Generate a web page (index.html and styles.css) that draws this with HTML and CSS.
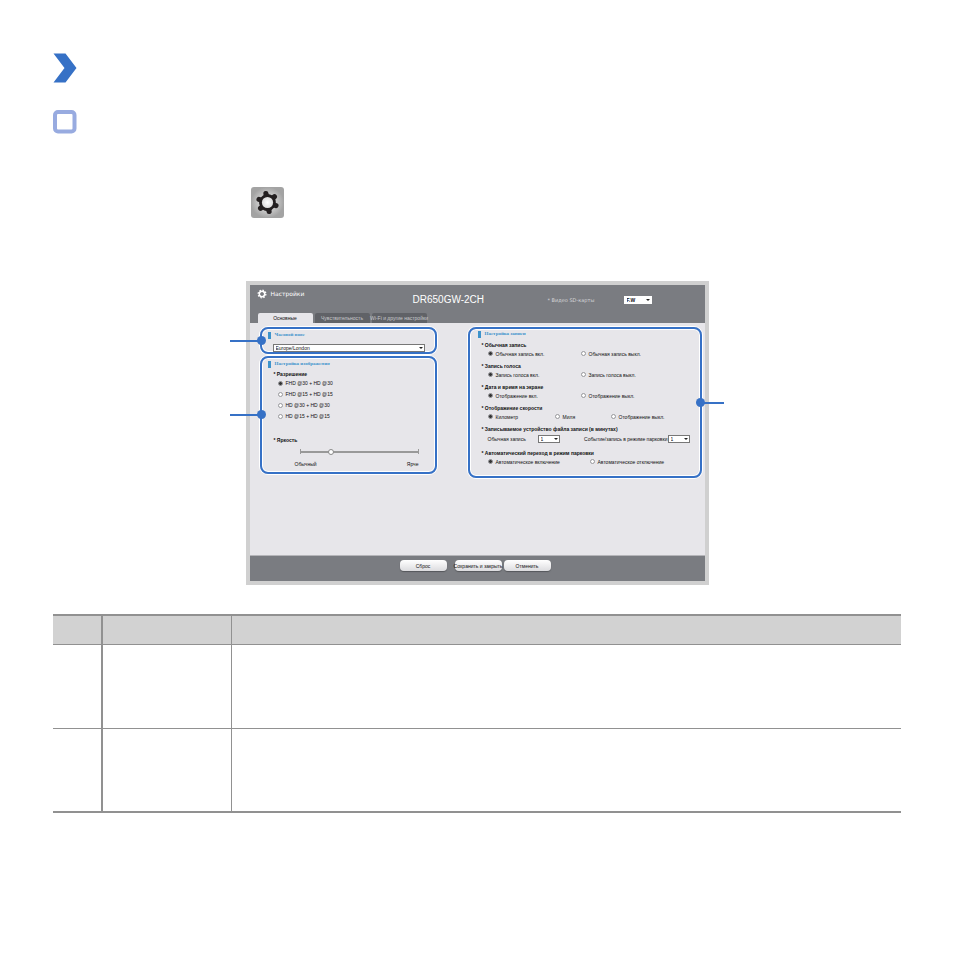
FILE: index.html
```html
<!DOCTYPE html>
<html lang="ru">
<head>
    <meta charset="UTF-8">
    <meta name="viewport" content="width=device-width, initial-scale=1.0">
    <title>Настройки</title>
    <link rel="stylesheet" href="styles.css">
</head>
<body>
    <main class="page">
        <svg class="chevron" viewBox="0 0 24 30" aria-hidden="true">
            <path d="M0.5 0.5H12.5L23.5 15L12.5 29.5H0.5L11.5 15Z" fill="#3671c6"/>
        </svg>
        <svg class="square" viewBox="0 0 24 24" aria-hidden="true">
            <rect x="2" y="2" width="19.5" height="19.5" rx="3" fill="none" stroke="#98abe0" stroke-width="4"/>
        </svg>

        <div class="gear-tile">
            <svg viewBox="-16.5 -15.5 33 31" aria-hidden="true">
                <defs>
                    <radialGradient id="tile">
                        <stop offset="0.3" stop-color="#dcdcdc"/>
                        <stop offset="1" stop-color="#a3a3a3"/>
                    </radialGradient>
                    <radialGradient id="hub">
                        <stop offset="0" stop-color="#fff"/>
                        <stop offset="1" stop-color="#dcdcdc"/>
                    </radialGradient>
                </defs>
                <rect x="-16.5" y="-15.5" width="33" height="31" rx="3" fill="url(#tile)"/>
                <g fill="#231f20" transform="rotate(-10)">
                    <circle r="8.4"/>
                    <path d="M0 -9V9M-7.8 -4.5L7.8 4.5M-7.8 4.5L7.8 -4.5" stroke="#231f20" stroke-width="5.2" stroke-linecap="round"/>
                </g>
                <circle r="5.6" fill="url(#hub)"/>
            </svg>
        </div>

        <form class="window">
            <header class="window-header">
                <div class="window-top">
                    <div class="brand">
                        <svg viewBox="-6 -6 12 12" aria-hidden="true">
                            <circle r="3.2" fill="none" stroke="#fff" stroke-width="1.8"/>
                            <circle r="4.6" fill="none" stroke="#fff" stroke-width="1.6" stroke-dasharray="1.8 1.81"/>
                        </svg>
                        <span>Настройки</span>
                    </div>
                    <h1 class="model">DR650GW-2CH</h1>
                    <label class="sd-label" for="firmware">* Видео SD-карты</label>
                    <div class="select select-bold">
                        <select id="firmware"><option>F.W</option></select>
                    </div>
                </div>
                <nav class="tabs">
                    <button type="button" class="tab active">Основные</button>
                    <button type="button" class="tab">Чувствительность</button>
                    <button type="button" class="tab">Wi-Fi и другие настройки</button>
                </nav>
            </header>

            <div class="window-body">
                <div class="column-left">
                    <section class="panel panel-zone callout-left">
                        <h2><label for="zone">Часовой пояс</label></h2>
                        <div class="select">
                            <select id="zone"><option>Europe/London</option></select>
                        </div>
                    </section>

                    <section class="panel panel-image callout-left">
                        <h2>Настройка изображения</h2>
                        <h3>Разрешение</h3>
                        <div class="resolutions">
                            <label><input type="radio" name="resolution" checked>FHD @30 + HD @30</label>
                            <label><input type="radio" name="resolution">FHD @15 + HD @15</label>
                            <label><input type="radio" name="resolution">HD @30 + HD @30</label>
                            <label><input type="radio" name="resolution">HD @15 + HD @15</label>
                        </div>
                        <h3><label for="brightness">Яркость</label></h3>
                        <div class="slider">
                            <input type="range" id="brightness" min="0" max="4" value="1">
                        </div>
                        <div class="slider-labels">
                            <span>Обычный</span>
                            <span>Ярче</span>
                        </div>
                    </section>
                </div>

                <section class="panel panel-record callout-right">
                    <h2>Настройка записи</h2>
                    <div class="groups">
                        <div class="group">
                            <h3>Обычная запись</h3>
                            <div class="options">
                                <label><input type="radio" name="normal" checked>Обычная запись вкл.</label>
                                <label><input type="radio" name="normal">Обычная запись выкл.</label>
                            </div>
                        </div>
                        <div class="group">
                            <h3>Запись голоса</h3>
                            <div class="options">
                                <label><input type="radio" name="voice" checked>Запись голоса вкл.</label>
                                <label><input type="radio" name="voice">Запись голоса выкл.</label>
                            </div>
                        </div>
                        <div class="group">
                            <h3>Дата и время на экране</h3>
                            <div class="options">
                                <label><input type="radio" name="date" checked>Отображение вкл.</label>
                                <label><input type="radio" name="date">Отображение выкл.</label>
                            </div>
                        </div>
                        <div class="group">
                            <h3>Отображение скорости</h3>
                            <div class="options options-speed">
                                <label><input type="radio" name="speed" checked>Километр</label>
                                <label><input type="radio" name="speed">Миля</label>
                                <label><input type="radio" name="speed">Отображение выкл.</label>
                            </div>
                        </div>
                        <div class="group">
                            <h3>Записываемое устройство файла записи (в минутах)</h3>
                            <div class="options options-length">
                                <label for="length-normal">Обычная запись</label>
                                <div class="select">
                                    <select id="length-normal"><option>1</option></select>
                                </div>
                                <label for="length-event">Событие/запись в режиме парковки</label>
                                <div class="select">
                                    <select id="length-event"><option>1</option></select>
                                </div>
                            </div>
                        </div>
                        <div class="group">
                            <h3>Автоматический переход в режим парковки</h3>
                            <div class="options options-parking">
                                <label><input type="radio" name="parking" checked>Автоматическое включение</label>
                                <label><input type="radio" name="parking">Автоматическое отключение</label>
                            </div>
                        </div>
                    </div>
                </section>
            </div>

            <footer class="window-footer">
                <button type="reset">Сброс</button>
                <div class="button-pair">
                    <button type="button">Сохранить и закрыть</button>
                    <button type="button">Отменить</button>
                </div>
            </footer>
        </form>

        <table class="description">
            <colgroup>
                <col class="col-number">
                <col class="col-name">
                <col>
            </colgroup>
            <thead>
                <tr><th></th><th></th><th></th></tr>
            </thead>
            <tbody>
                <tr><td></td><td></td><td></td></tr>
                <tr><td></td><td></td><td></td></tr>
            </tbody>
        </table>
    </main>
</body>
</html>
```
FILE: styles.css
```css
* {
    margin: 0;
    padding: 0;
    box-sizing: border-box;
}

body {
    background-color: #fff;
    color: #111;
    font-family: 'Liberation Sans Narrow', 'Liberation Sans', sans-serif;
    font-size: 5px;
    line-height: 8px;
}

button,
select {
    font: inherit;
    color: inherit;
    border: none;
}

.page {
    padding: 53px 54px 53px 53px;
}

/* Page icons */
.chevron {
    display: block;
    width: 24px;
    height: 30px;
}

.square {
    display: block;
    width: 24px;
    height: 24px;
    margin-top: 27px;
}

.gear-tile {
    margin: 53px 0 0 198px;
}

.gear-tile svg {
    display: block;
    width: 33px;
    height: 31px;
}

/* Settings window */
.window {
    max-width: 463px;
    margin: 63px auto 29px;
    border: 4px solid #d0d0d0;
    background-color: #e7e6ea;
}

.window-header {
    background-color: #7a7c81;
    color: #fff;
}

.window-top {
    display: grid;
    grid-template-columns: 156px 135px 76px 28px;
    align-items: center;
    height: 28px;
    padding: 2px 0 0 7px;
}

.brand {
    display: flex;
    align-items: center;
    gap: 4px;
    align-self: start;
    padding-top: 2px;
    font-family: 'DejaVu Sans', sans-serif;
    font-size: 6px;
}

.brand svg {
    width: 10px;
    height: 10px;
}

.model {
    font-family: 'Liberation Sans', sans-serif;
    font-size: 10px;
    font-weight: normal;
}

.sd-label {
    color: #d4d5d8;
    font-family: 'DejaVu Sans', sans-serif;
}

.tabs {
    display: flex;
    gap: 2px;
    padding-left: 8px;
}

.tab {
    display: flex;
    align-items: center;
    justify-content: center;
    width: 55px;
    height: 10px;
    border-radius: 2px 2px 0 0;
    background-color: #606267;
    color: #c8c9cc;
    white-space: nowrap;
}

.tab.active {
    background-color: #e7e6ea;
    color: #111;
}

.window-body {
    display: flex;
    justify-content: space-between;
    align-items: flex-start;
    min-height: 232px;
    padding: 4px 3px 4px 10px;
}

.column-left {
    display: flex;
    flex-direction: column;
    gap: 2px;
    width: 177px;
}

/* Panels */
.panel {
    position: relative;
    border: 2px solid #3671c6;
    border-radius: 8px;
    box-shadow: 0 0 0 1px #fff, inset 0 0 0 1px #fff;
}

.panel h2 {
    display: flex;
    align-items: center;
    gap: 4px;
    color: #3d93cc;
    font-family: 'Liberation Serif', serif;
    font-size: 5px;
}

.panel h2::before {
    content: "";
    width: 3px;
    height: 7px;
    background-color: #3d93cc;
}

.panel h3 {
    font-family: 'Liberation Sans', sans-serif;
    font-size: 5px;
}

.panel h3::before {
    content: "* ";
}

.panel-zone {
    padding: 2px 10px 0 6px;
}

.panel-zone .select {
    margin: 5px 0 0 5px;
}

.panel-image {
    padding: 2px 16px 4px 6px;
}

.panel-image h3 {
    margin: 2px 0 0 6px;
}

.resolutions {
    display: flex;
    flex-direction: column;
    gap: 3px;
    margin: 1px 0 16px 10px;
}

.panel-record {
    width: 234px;
    padding: 1px 8px 10px;
}

.groups {
    display: flex;
    flex-direction: column;
    gap: 4px;
    margin: 3px 0 0 4px;
}

.options {
    display: grid;
    grid-template-columns: 93px 1fr;
    align-items: center;
    min-height: 9px;
    padding-left: 6px;
    white-space: nowrap;
}

.options-speed {
    grid-template-columns: 67px 56px 1fr;
}

.options-length {
    grid-template-columns: 50px 22px 108px 22px;
    min-height: 12px;
}

.options-length label:nth-of-type(2) {
    justify-self: end;
}

.options-parking {
    grid-template-columns: 102px 1fr;
}

.panel label:has(input) {
    display: flex;
    align-items: center;
    gap: 3px;
}

/* Form controls */
input[type="radio"] {
    appearance: none;
    width: 5px;
    height: 5px;
    border: 1px solid #97979b;
    border-radius: 50%;
    background-color: #fff;
}

input[type="radio"]:checked {
    background-color: #333;
}

.select {
    position: relative;
}

.select select {
    appearance: none;
    display: block;
    width: 100%;
    height: 8px;
    padding-left: 2px;
    border: 1px solid #777;
    border-radius: 0;
    background-color: #fff;
    color: #111;
    line-height: 6px;
}

.select::after {
    content: "";
    position: absolute;
    top: 3px;
    right: 2px;
    border: 2px solid transparent;
    border-top-color: #222;
    pointer-events: none;
}

.select-bold select {
    border-color: #fff;
    font-weight: bold;
}

.slider {
    display: flex;
    align-items: center;
    height: 5px;
    margin: 5px 0 0 32px;
    border-left: 1px solid #999;
    border-right: 1px solid #999;
}

.slider input {
    appearance: none;
    width: 100%;
    height: 2px;
    background-color: #999;
}

.slider input::-webkit-slider-thumb {
    appearance: none;
    width: 6px;
    height: 6px;
    border: 1px solid #888;
    border-radius: 50%;
    background-color: #fff;
}

.slider-labels {
    display: flex;
    justify-content: space-between;
    margin: 6px 0 0 27px;
}

/* Callout dots and their lines */
.callout-left::before,
.callout-right::before {
    content: "";
    position: absolute;
    top: 50%;
    width: 32px;
    height: 2px;
    margin-top: -1px;
    background-color: #3671c6;
}

.callout-left::after,
.callout-right::after {
    content: "";
    position: absolute;
    top: 50%;
    width: 9px;
    height: 9px;
    margin-top: -5px;
    border-radius: 50%;
    background-color: #3671c6;
}

.callout-left::before {
    right: 100%;
}

.callout-left::after {
    left: -5px;
}

.callout-right::before {
    left: 100%;
    width: 24px;
}

.callout-right::after {
    right: -5px;
}

/* Window footer */
.window-footer {
    display: flex;
    justify-content: center;
    gap: 8px;
    padding: 4px 4px 10px 0;
    border-top: 1px solid #b5b5b9;
    background-color: #7a7c81;
}

.button-pair {
    display: flex;
    gap: 2px;
}

.window-footer button {
    display: flex;
    align-items: center;
    justify-content: center;
    width: 47px;
    height: 11px;
    border-radius: 4px;
    background: linear-gradient(#fff, #dcdcdf);
    box-shadow: 0 1px 1px #55575b;
    white-space: nowrap;
}

/* Description table */
.description {
    width: 100%;
    table-layout: fixed;
    border-collapse: separate;
    border-spacing: 0;
    border-top: 2px solid #919191;
    border-bottom: 2px solid #919191;
}

.col-number {
    width: 50px;
}

.col-name {
    width: 129px;
}

.description th {
    height: 29px;
    background-color: #d2d2d2;
}

.description td {
    height: 84px;
}

.description th,
.description td {
    border-bottom: 1px solid #919191;
}

.description tr :nth-child(1) {
    border-right: 2px solid #919191;
}

.description tr :nth-child(2) {
    border-right: 1px solid #919191;
}

.description tbody tr:last-child td {
    height: 82px;
    border-bottom: none;
}
```
